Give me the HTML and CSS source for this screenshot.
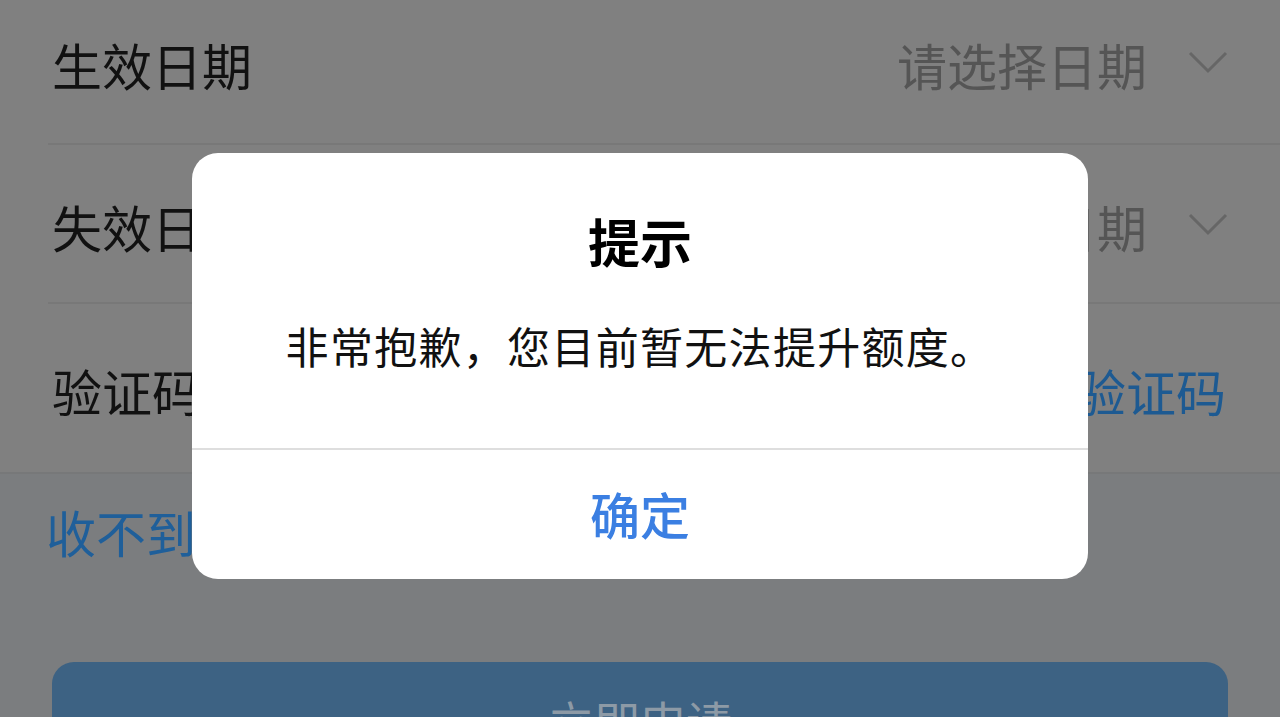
FILE: index.html
```html
<!DOCTYPE html>
<html lang="zh-CN">
<head>
<meta charset="utf-8">
<title>提示</title>
<link rel="stylesheet" href="styles.css">
</head>
<body>
<div class="page">
  <div class="form">
    <div class="row row-1">
      <span class="label">生效日期</span>
      <span class="value">
        <span class="placeholder">请选择日期</span>
        <svg class="chev" width="40" height="24" viewBox="0 0 40 24"><path d="M2 3 L20 21 L38 3" fill="none" stroke="#666" stroke-width="3"/></svg>
      </span>
    </div>
    <div class="row row-2">
      <span class="label">失效日期</span>
      <span class="value">
        <span class="placeholder">请选择日期</span>
        <svg class="chev" width="40" height="24" viewBox="0 0 40 24"><path d="M2 3 L20 21 L38 3" fill="none" stroke="#666" stroke-width="3"/></svg>
      </span>
    </div>
    <div class="row row-3">
      <span class="label">验证码</span>
      <span class="value"><span class="link">获取验证码</span></span>
    </div>
  </div>
  <div class="lower">
    <div class="help">收不到验证码？</div>
    <div class="submit">立即申请</div>
  </div>
</div>
<div class="mask">
  <div class="dialog">
    <div class="dialog-body">
      <div class="dialog-title">提示</div>
      <div class="dialog-msg">非常抱歉，您目前暂无法提升额度。</div>
    </div>
    <div class="dialog-foot">确定</div>
  </div>
</div>
</body>
</html>
```
FILE: styles.css
```css
* { box-sizing: border-box; }
html, body {
  margin: 0;
  padding: 0;
  width: 1280px;
  height: 717px;
  overflow: hidden;
}
body {
  font-family: "Noto Sans CJK SC", "Noto Sans", sans-serif;
  background: #7b7d7f;
  position: relative;
}
.page {
  display: flex;
  flex-direction: column;
}
.form {
  background: #808080;
  border-bottom: 2px solid #777879;
}
.row {
  display: flex;
  align-items: center;
  justify-content: space-between;
  margin-left: 48px;
  padding-left: 4px;
  padding-right: 54px;
  border-bottom: 2px solid #787878;
}
.row-1 { height: 145px; padding-bottom: 16px; }
.row-2 { height: 159px; padding-top: 4px; }
.row-3 { height: 168px; border-bottom: none; padding-top: 4px; }
.label {
  font-size: 50px;
  color: #111;
  line-height: 1;
}
.value {
  display: flex;
  align-items: center;
  gap: 41px;
}
.placeholder {
  font-size: 50px;
  color: #555;
  line-height: 1;
}
.chev { display: block; margin-top: -4px; margin-right: -2px; }
.link {
  font-size: 50px;
  color: #1d5a92;
  line-height: 1;
}
.lower {
  padding: 27px 52px 0 46px;
}
.help {
  font-size: 50px;
  color: #1f5f9a;
  line-height: 60px;
}
.submit {
  margin-top: 101px;
  margin-left: 6px;
  height: 110px;
  border-radius: 22px;
  background: #3d6283;
  color: #8d9aa6;
  font-size: 46px;
  text-align: center;
  padding-top: 30px;
  line-height: 56px;
}
.mask {
  position: absolute;
  left: 0;
  top: 0;
  width: 1280px;
  height: 717px;
}
.dialog {
  position: absolute;
  left: 192px;
  top: 153px;
  width: 896px;
  height: 426px;
  background: #fff;
  border-radius: 26px;
  display: flex;
  flex-direction: column;
  overflow: hidden;
}
.dialog-body {
  height: 297px;
  border-bottom: 2px solid #dedede;
  display: flex;
  flex-direction: column;
  align-items: center;
  padding-top: 58px;
}
.dialog-title {
  font-size: 52px;
  font-weight: 700;
  color: #000;
  line-height: 60px;
}
.dialog-msg {
  margin-top: 48px;
  font-size: 43px;
  letter-spacing: 1.3px;
  color: #111;
  line-height: 52px;
}
.dialog-foot {
  flex: 1;
  display: flex;
  align-items: center;
  justify-content: center;
  font-size: 50px;
  font-weight: 500;
  color: #3b7fe2;
  padding-bottom: 4px;
}
```
